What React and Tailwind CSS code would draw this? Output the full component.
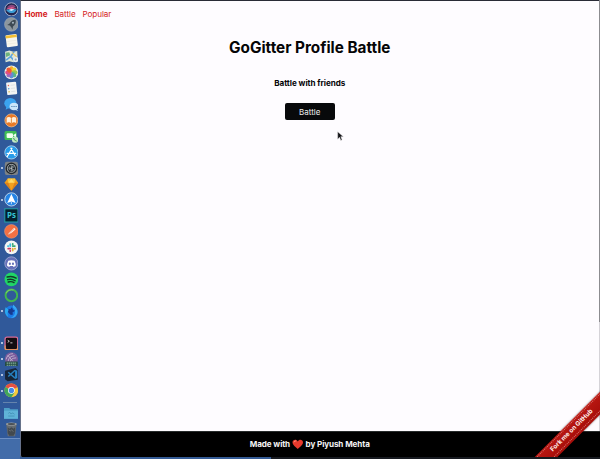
import React from "react";

function Icon({ children, running, label }) {
  return (
    <div className="flex h-[15.92px] w-full shrink-0 items-center" aria-label={label}>
      <span className={running ? "ml-[1px] size-[1.5px] rounded-full bg-[#dbe6f5]" : "ml-[1px] size-[1.5px]"} />
      <svg viewBox="0 0 28 28" className="ml-[1.1px] size-[14.8px] shrink-0">
        {children}
      </svg>
    </div>
  );
}

const petals = [
  ["#f7a928", 0], ["#f0d534", 45], ["#9cc84b", 90], ["#54b48c", 135],
  ["#5b8fd6", 180], ["#9a6cc0", 225], ["#e0508a", 270], ["#ee5a35", 315],
];

function Dock() {
  return (
    <nav className="flex h-[439px] w-full flex-col border-b border-[#6d8fc4] bg-[#30599a] pt-[1px]">
      <Icon label="Siri">
        <circle cx="14" cy="14" r="12.5" fill="#222650" stroke="#a9b3ce" strokeWidth="1.8" />
        <path d="M5 11c5-7 13-8 18-1-7-1-11 0-18 1z" fill="#8a477f" />
        <path d="M4 14c6-6 14-6 20-1-7-1-13 1-20 1z" fill="#d6568b" />
        <path d="M4 15c8-2 12-1 20-1-3 8-13 10-20 1z" fill="#399bd4" />
        <path d="M9 15l5-2 6 1-6 3z" fill="#d9eaff" />
      </Icon>
      <Icon label="Launchpad">
        <circle cx="14" cy="14" r="13" fill="#8c969e" stroke="#a5b0b9" />
        <path d="M22 5c-6 0-10 4-12 8l-4 2 5 1 3 4 2 4 1-6c4-3 6-7 5-13z" fill="#3d4953" />
        <circle cx="17" cy="11" r="2" fill="#a6b5c1" />
      </Icon>
      <Icon label="Notes">
        <g transform="rotate(-7 14 14)">
          <rect x="4" y="3" width="21" height="23" rx="2" fill="#f8f7ed" />
          <path d="M4 4h21v5H4z" fill="#f2bf35" />
          <path d="M6 15h17M6 20h17" stroke="#e8e5d8" />
        </g>
      </Icon>
      <Icon label="Maps">
        <path d="M2 5l8-2 8 2 7-1 1 19-8 2-8-2-7 2z" fill="#dfe6d5" />
        <path d="M3 7l7-1 2 6-8 3z" fill="#6cb37c" />
        <path d="M4 21l9-7 6-9M12 14l8 9" stroke="#5ca5df" strokeWidth="3" fill="none" />
        <path d="M15 7l9 8" stroke="#efc75b" strokeWidth="2" />
        <circle cx="22" cy="20" r="5" fill="#e7ecef" /><circle cx="22" cy="20" r="2" fill="#8dabba" />
      </Icon>
      <Icon label="Photos">
        <circle cx="14" cy="14" r="13" fill="#eef0eb" />
        {petals.map(([color, angle]) => (
          <ellipse key={angle} cx="14" cy="8" rx="4" ry="5.6" fill={color} transform={`rotate(${angle} 14 14)`} />
        ))}
      </Icon>
      <Icon label="Reminders">
        <g transform="rotate(-6 14 14)">
          <rect x="5" y="2" width="19" height="24" rx="2" fill="#f2f3f3" />
          <circle cx="9" cy="8" r="1.4" fill="#e96a56" /><circle cx="9" cy="14" r="1.4" fill="#4c9bde" /><circle cx="9" cy="20" r="1.4" fill="#e1b743" />
          <path d="M13 8h8M13 14h8M13 20h8" stroke="#d5d9dd" strokeWidth="1.3" />
        </g>
      </Icon>
      <Icon label="Messages">
        <ellipse cx="12" cy="12" rx="11.5" ry="10" fill="#3ba4f0" /><path d="M5 17l-2 7 8-4z" fill="#3ba4f0" />
        <ellipse cx="19" cy="18" rx="8.5" ry="7" fill="#c9e5fa" /><path d="M23 22l4 4-8-2z" fill="#c9e5fa" />
        <path d="M14 18h2m2 0h2m2 0h2" stroke="#3773a5" strokeWidth="2" />
      </Icon>
      <Icon label="Books">
        <circle cx="14" cy="14" r="12.3" fill="#e97926" stroke="#e9bb8b" strokeWidth="1.5" />
        <path d="M5 9q5-3 9 1 4-4 9-1v10q-5-3-9 1-4-4-9-1z" fill="#fff0dc" /><path d="M14 10v10" stroke="#e38a39" strokeWidth="1.8" />
      </Icon>
      <Icon label="FaceTime">
        <rect x="1" y="4" width="23" height="17" rx="3" fill="#40bd55" />
        <rect x="5" y="8" width="12" height="9" rx="2" fill="#f1fff1" /><path d="M17 12l6-4v9z" fill="#f1fff1" />
        <circle cx="21" cy="20" r="6" fill="#c2e7c8" /><path d="M18 17q1 5 6 6" stroke="#49a35a" strokeWidth="2" fill="none" />
      </Icon>
      <Icon label="App Store">
        <circle cx="14" cy="14" r="12.5" fill="#279be9" stroke="#b9def5" strokeWidth="1.5" />
        <path d="M15 6L8 19M13 6l8 14M6 16h16M7 20l-1 2" stroke="white" strokeWidth="2.3" strokeLinecap="round" />
      </Icon>
      <Icon label="System Preferences" running>
        <rect x="1.5" y="1.5" width="25" height="25" rx="4" fill="#7c8286" />
        <circle cx="14" cy="14" r="9.7" fill="#aeb5b8" stroke="#242a2f" strokeWidth="2.6" />
        <circle cx="14" cy="14" r="6.2" fill="#7a8388" stroke="#20272c" strokeWidth="1.5" />
        <path d="M14 14h7M14 14l-4-6M14 14l-4 6" stroke="#1c242a" strokeWidth="2" /><circle cx="14" cy="14" r="2" fill="#b6bdc0" />
      </Icon>
      <Icon label="Sketch">
        <path d="M7 3h14l6 8-13 15L1 11z" fill="#f2a11d" /><path d="M7 3l1 8 6-8 6 8 1-8z" fill="#f8c943" />
        <path d="M1 11h7l6 15zM20 11h7L14 26z" fill="#dc811c" /><path d="M8 11l6-8 6 8z" fill="#ffdb67" />
      </Icon>
      <Icon label="Spark" running>
        <circle cx="14" cy="14" r="12.5" fill="#2685e5" stroke="#b9d5ee" strokeWidth="1.8" />
        <path d="M14 4l8 17-8-3-8 3z" fill="white" /><path d="M14 18v5" stroke="#badaf7" strokeWidth="2" />
      </Icon>
      <Icon label="Photoshop">
        <rect x="1.5" y="1.5" width="25" height="25" fill="#04202d" stroke="#259da8" strokeWidth="2" />
        <text x="14" y="19.5" textAnchor="middle" className="font-['Open_Sans',sans-serif] text-[15px] font-bold" fill="#38c6d7">Ps</text>
      </Icon>
      <Icon label="Postman">
        <circle cx="14" cy="14" r="13" fill="#f37043" stroke="#e79c80" />
        <path d="M7 21l3-5 9-9 3 3-9 8z" fill="#fff0e8" /><path d="M10 17l9-8M7 21l7-4" stroke="#d75c35" strokeWidth=".9" />
      </Icon>
      <Icon label="Slack">
        <circle cx="14" cy="14" r="13" fill="#f3f5f4" />
        <g strokeWidth="3.4" strokeLinecap="round"><path d="M11.8 8v3.5M7.5 11.5h.5" stroke="#37bce0" /><path d="M16.5 11.5h4M16.5 7.5v.5" stroke="#37a873" /><path d="M16.5 16.5V20M20.5 16.5h.5" stroke="#e3ae38" /><path d="M8 16.5h3.8M11.8 20.5v.5" stroke="#cc3764" /></g>
      </Icon>
      <Icon label="Discord">
        <circle cx="14" cy="14" r="12.5" fill="#6571b9" stroke="#a6afd6" strokeWidth="1.5" />
        <path d="M8 9q6-2 12 0 3 6 2 10l-4 2-1-2h-6l-1 2-4-2Q5 15 8 9z" fill="white" />
        <ellipse cx="11" cy="14.5" rx="2" ry="2.3" fill="#6571b9" /><ellipse cx="17" cy="14.5" rx="2" ry="2.3" fill="#6571b9" />
      </Icon>
      <Icon label="Spotify">
        <circle cx="14" cy="14" r="13" fill="#20d567" /><path d="M6 9.5q9-3 17 2M7 14.5q8-2 14 2M8 19q6-2 11 1" fill="none" stroke="#123b27" strokeWidth="2.7" strokeLinecap="round" />
      </Icon>
      <Icon label="Green ring">
        <circle cx="14" cy="14" r="11" fill="none" stroke="#41b650" strokeWidth="3.7" /><path d="M4 10A11 11 0 0 1 18 4" fill="none" stroke="#79ce62" strokeWidth="2" />
      </Icon>
      <Icon label="Firefox Developer Edition" running>
        <circle cx="14" cy="15" r="12" fill="#1c7ae6" />
        <path d="M17 1q10 8 8 17-3 9-12 8 8-4 8-11 0-6-4-8z" fill="#36a7f4" />
        <path d="M7 9l5 1 3-4 2 5 4 2-5 3 1 4-4 1-5-5z" fill="#173a90" />
        <path d="M3 6q-4 13 5 18-3-8 1-13z" fill="#29a8ef" />
      </Icon>
      <div className="h-4 shrink-0" />
      <Icon label="Terminal" running>
        <rect x="2" y="2" width="24" height="24" rx="4" fill="#120d12" stroke="#d66a96" strokeWidth="2.5" /><path d="M2.2 18v5q0 3 3 3h18q3 0 3-4v-4" fill="none" stroke="#e39a4e" strokeWidth="2" />
        <path d="M7 8l3 2-3 2M12 13h4" fill="none" stroke="#ece7e9" strokeWidth="1.6" />
      </Icon>
      <Icon label="GitHub tool" running>
        <circle cx="14" cy="13" r="12.5" fill="#7c5b9d" /><path d="M4 14Q6 4 17 3M8 17Q9 8 20 7M12 18q0-6 11-7M7 6l10 12" fill="none" stroke="#c0b7cf" strokeWidth="1.7" />
        <rect x="2" y="18" width="24" height="10" rx="2" fill="#254a40" /><path d="M5 21h18M5 25h18" stroke="#85ae9d" strokeWidth="2" strokeDasharray="3 1" />
      </Icon>
      <Icon label="Visual Studio Code" running>
        <path d="M2 7L22 2l4 4v18l-19 3-5-4z" fill="#162437" /><path d="M21 5l4 2v14l-4 2z" fill="#2584cb" /><path d="M8 10l13 11M8 18L21 6" stroke="#267fbe" strokeWidth="2.8" />
      </Icon>
      <Icon label="Chrome" running>
        <circle cx="14" cy="14" r="13" fill="#f4c93d" /><path d="M14 14L2.7 7.5A13 13 0 0 1 25.3 8z" fill="#e45143" /><path d="M14 14L2.7 7.5A13 13 0 0 0 14 27l6-9z" fill="#41a65d" />
        <circle cx="14" cy="14" r="6.3" fill="white" /><circle cx="14" cy="14" r="5" fill="#4288e8" />
      </Icon>
      <div className="mx-[3px] mt-[3px] h-px shrink-0 bg-[#6584ad]" />
      <div className="h-[3px] shrink-0" />
      <Icon label="Downloads">
        <path d="M0 4h10l2 2h16v18H0z" fill="#4e9fc8" /><path d="M0 9h28v15H0z" fill="#60b3d8" /><path d="M8 14l3-2 2 3 4-2 3 3M8 19h12" stroke="#438fb5" strokeWidth="1.6" fill="none" />
      </Icon>
      <Icon label="Trash">
        <path d="M4 3h20l-3 24H7z" fill="#656b70" /><ellipse cx="14" cy="4" rx="10" ry="3" fill="#a6abac" /><ellipse cx="14" cy="4" rx="7.5" ry="2" fill="#4b5157" />
        <path d="M7 10l3 3 4-3 4 3 3-3v11l-3 5h-8l-3-5z" fill="#42494f" /><path d="M9 15l3 2 2-2 4 3" fill="none" stroke="#888e92" />
      </Icon>
    </nav>
  );
}

function Heart() {
  return <svg viewBox="0 0 24 22" className="h-[10.5px] w-[11.5px]" aria-label="heart"><path d="M12 21C8 17 1 13 1 7c0-6 8-8 11-2 3-6 11-4 11 2 0 6-7 10-11 14z" fill="#e83a2d" /><path d="M4 7q1-4 5-3" fill="none" stroke="#ff907b" strokeWidth="2" /></svg>;
}

export default function App() {
  return (
    <div className="relative flex h-[459px] w-[600px] overflow-hidden bg-[#385f9e] font-['Inter',sans-serif]">
      <aside className="h-full w-[20px] shrink-0 bg-[#426ca9]"><Dock /></aside>
      <div className="flex min-w-0 grow flex-col">
        <div className="flex h-[457px] flex-col overflow-hidden rounded-bl-[2px] border-t border-l border-t-[#292b36] border-l-[#66718a] bg-black">
          <main className="flex h-[430px] flex-col bg-[#fefcff]">
            <nav className="flex h-[26px] shrink-0 items-center gap-[7px] pl-[3.5px] text-[8.1px] tracking-[-0.08px] text-[#d51c24]">
              <a className="font-bold">Home</a><a>Battle</a><a>Popular</a>
            </nav>
            <section className="flex flex-col items-center pr-[1.5px] text-[#050506]">
              <h1 className="mt-[9px] text-[15.3px] leading-6 font-bold whitespace-nowrap">GoGitter Profile Battle</h1>
              <h2 className="mt-[17px] text-[8.1px] leading-3 font-bold tracking-[-0.05px]">Battle with friends</h2>
              <button className="mt-[14px] flex h-[17px] w-[50px] items-center justify-center rounded-[2px] bg-[#08090b] text-[8px] text-[#eeeeef]">Battle</button>
            </section>
          </main>
          <footer className="flex h-[26px] items-center justify-center gap-[2px] border-t border-[#272b2b] pr-[1.5px] text-[8.1px] font-bold tracking-[-0.1px] text-[#f4f4f4]">
            <span>Made with</span><Heart /><span>by Piyush Mehta</span>
          </footer>
        </div>
        <div className="flex h-[2px]"><div className="w-[251px] bg-[#345b95]" /><div className="grow bg-[#171a20]" /></div>
      </div>
      <div className="absolute top-0 right-0 h-[322px] w-px bg-[#8c8c90]" />
      <div className="absolute top-[322px] right-0 h-[109px] w-px bg-[#d5d3d8]" />
      <svg viewBox="0 0 11 16" className="absolute top-[131px] left-[337px] h-[10px] w-[7px]"><path d="M1 1v12l3-3 2 5 2-1-2-5h4z" fill="#111115" stroke="#deddde" strokeWidth=".8" /></svg>
      <div className="absolute top-0 left-0 h-[457px] w-[600px] overflow-hidden">
        <a className="absolute top-[422.5px] left-[512px] flex h-[15.5px] w-[120px] -rotate-45 items-center justify-center bg-linear-to-b from-[#b91712] to-[#a50d09] text-[6.3px] font-bold text-[#fff1ef] shadow-[0_0_2px_rgba(0,0,0,0.55)]">
          <span className="flex h-[13px] w-full items-center justify-center border-y border-dotted border-[#d97770] whitespace-nowrap">Fork me on GitHub</span>
        </a>
      </div>
    </div>
  );
}
